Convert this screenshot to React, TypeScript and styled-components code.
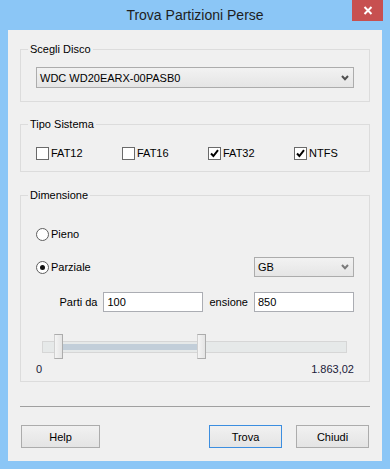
import React, { useState } from 'react';
import styled, { createGlobalStyle } from 'styled-components';

const GlobalStyle = createGlobalStyle`
  html, body {
    margin: 0;
    padding: 0;
    background: #8bc6f6;
  }
  body {
    font-family: "Liberation Sans", Arial, sans-serif;
    font-size: 11px;
    color: #000;
  }
`;

const Window = styled.div`
  width: 390px;
  height: 469px;
  background: #8bc6f6;
  display: flex;
  flex-direction: column;
`;

const TitleBar = styled.div`
  height: 30px;
  display: grid;
  grid-template-columns: 1fr auto 1fr;
`;

const Title = styled.div`
  grid-column: 2;
  font-size: 14px;
  line-height: 30px;
  color: #1e1e1e;
`;

const CloseButton = styled.div`
  grid-column: 3;
  justify-self: end;
  width: 31px;
  height: 21px;
  margin-right: 7px;
  background: #c75050;
  display: flex;
  align-items: center;
  justify-content: center;
`;

const Client = styled.div`
  margin: 0 8px;
  height: 431px;
  box-sizing: border-box;
  background: #f0f0f0;
  padding: 13px 12px 0 12px;
  display: flex;
  flex-direction: column;
`;

const Group = styled.fieldset<{ $gap?: number; $pt: number; $pb: number }>`
  margin: ${(p) => p.$gap ?? 0}px 0 0 0;
  padding: ${(p) => p.$pt}px 15px ${(p) => p.$pb}px 15px;
  border: 1px solid #dcdcdc;
  min-width: 0;
`;

const Legend = styled.legend`
  margin-left: -8px;
  padding: 0 2px;
  line-height: 13px;
  font-size: 11px;
  color: #000;
`;

const Combo = styled.div<{ $w?: number; $h: number; $arrow: string }>`
  box-sizing: border-box;
  width: ${(p) => (p.$w ? `${p.$w}px` : '100%')};
  height: ${(p) => p.$h}px;
  border: 1px solid #acacac;
  background: linear-gradient(#f2f2f2, #e5e5e5);
  display: flex;
  align-items: center;
  justify-content: space-between;
  padding: 0 4px 0 3px;
  svg path {
    stroke: ${(p) => p.$arrow};
  }
`;

const CheckRow = styled.div`
  display: grid;
  grid-template-columns: repeat(4, 86px);
  height: 13px;
`;

const CheckItem = styled.label`
  display: flex;
  align-items: center;
  gap: 2px;
  line-height: 13px;
`;

const Box = styled.span`
  box-sizing: border-box;
  width: 13px;
  height: 13px;
  border: 1px solid #6a6a6a;
  background: #fff;
  display: flex;
  align-items: center;
  justify-content: center;
`;

const RadioItem = styled.label`
  display: flex;
  align-items: center;
  gap: 2px;
  line-height: 13px;
`;

const RadioCircle = styled.span<{ $on?: boolean }>`
  box-sizing: border-box;
  width: 13px;
  height: 13px;
  border-radius: 50%;
  border: 1px solid #5e5e5e;
  background: #fff;
  display: flex;
  align-items: center;
  justify-content: center;
  &::after {
    content: '';
    width: 5px;
    height: 5px;
    border-radius: 50%;
    background: ${(p) => (p.$on ? '#111' : 'transparent')};
  }
`;

const Row = styled.div<{ $mt: number; $justify?: string }>`
  margin-top: ${(p) => p.$mt}px;
  display: flex;
  align-items: center;
  justify-content: ${(p) => p.$justify ?? 'flex-start'};
  gap: 6px;
`;

const TextInput = styled.input`
  box-sizing: border-box;
  width: 100px;
  height: 20px;
  border: 1px solid #abadb3;
  background: #fff;
  padding: 0 3px;
  font-family: "Liberation Sans", Arial, sans-serif;
  font-size: 11px;
  color: #000;
  outline: none;
`;

const Slider = styled.div`
  margin: 22px 7px 0 6px;
  height: 25px;
  position: relative;
  display: flex;
  align-items: center;
`;

const Track = styled.div`
  box-sizing: border-box;
  width: 100%;
  height: 12px;
  border: 1px solid #d6d6d6;
  background: #e6e9e9;
  position: relative;
`;

const Range = styled.div`
  position: absolute;
  top: 2px;
  height: 6px;
  background: #c2ced9;
`;

const Thumb = styled.div`
  position: absolute;
  top: 0;
  box-sizing: border-box;
  width: 9px;
  height: 25px;
  border: 1px solid #acacac;
  border-left-color: #d0d0d0;
  background: linear-gradient(90deg, #f4f4f4, #e4e4e4);
`;

const ScaleRow = styled.div`
  margin-top: 4px;
  display: flex;
  justify-content: space-between;
  line-height: 13px;
  color: #1a1a3a;
`;

const Separator = styled.div`
  margin-top: 24px;
  height: 1px;
  background: #a0a0a0;
`;

const Buttons = styled.div`
  margin-top: 18px;
  padding: 0 1px;
  display: flex;
  gap: 14px;
`;

const Button = styled.button<{ $w: number; $focus?: boolean; $push?: boolean }>`
  box-sizing: border-box;
  width: ${(p) => p.$w}px;
  height: 23px;
  margin-left: ${(p) => (p.$push ? 'auto' : '0')};
  border: 1px solid ${(p) => (p.$focus ? '#3c8ee0' : '#acacac')};
  background: linear-gradient(#f1f1f1, #e4e4e4);
  font-family: "Liberation Sans", Arial, sans-serif;
  font-size: 11px;
  color: #000;
  padding: 0;
`;

const Chevron = () => (
  <svg width="8" height="6" viewBox="0 0 8 6">
    <path d="M1 1 L4 4.2 L7 1" fill="none" strokeWidth="2" />
  </svg>
);

const Check = () => (
  <svg width="9" height="9" viewBox="0 0 9 9">
    <path d="M1 4.5 L3.4 7 L8 1.2" fill="none" stroke="#000" strokeWidth="2" />
  </svg>
);

const SYSTEMS = [
  ['FAT12', false],
  ['FAT16', false],
  ['FAT32', true],
  ['NTFS', true],
] as const;

const MAX = 1863.02;

export default function App() {
  const [from] = useState(100);
  const [to] = useState(850);
  const [partial] = useState(true);

  // posizioni cursori sulla traccia (305px)
  const leftPos = 12;
  const rightPos = 155;

  return (
    <Window>
      <GlobalStyle />
      <TitleBar>
        <Title>Trova Partizioni Perse</Title>
        <CloseButton>
          <svg width="10" height="9" viewBox="0 0 10 9">
            <path d="M1.5 1 L8.5 8 M8.5 1 L1.5 8" stroke="#fff" strokeWidth="2" />
          </svg>
        </CloseButton>
      </TitleBar>
      <Client>
        <Group $pt={11} $pb={13}>
          <Legend>Scegli Disco</Legend>
          <Combo $h={21} $arrow="#505050">
            <span>WDC WD20EARX-00PASB0</span>
            <Chevron />
          </Combo>
        </Group>

        <Group $gap={16} $pt={16} $pb={11}>
          <Legend>Tipo Sistema</Legend>
          <CheckRow>
            {SYSTEMS.map(([name, on]) => (
              <CheckItem key={name}>
                <Box>{on && <Check />}</Box>
                {name}
              </CheckItem>
            ))}
          </CheckRow>
        </Group>

        <Group $gap={17} $pt={26} $pb={5}>
          <Legend>Dimensione</Legend>
          <RadioItem>
            <RadioCircle $on={!partial} />
            Pieno
          </RadioItem>
          <Row $mt={16} $justify="space-between">
            <RadioItem>
              <RadioCircle $on={partial} />
              Parziale
            </RadioItem>
            <Combo $w={100} $h={20} $arrow="#7a7a7a">
              <span>GB</span>
              <Chevron />
            </Combo>
          </Row>
          <Row $mt={15} $justify="flex-end">
            <span>Parti da</span>
            <TextInput defaultValue={from} />
            <span>ensione</span>
            <TextInput defaultValue={to} />
          </Row>
          <Slider>
            <Track>
              <Range style={{ left: leftPos + 8 - 1, width: rightPos - leftPos - 8 }} />
            </Track>
            <Thumb style={{ left: leftPos }} />
            <Thumb style={{ left: rightPos }} />
          </Slider>
          <ScaleRow>
            <span>0</span>
            <span>{MAX.toLocaleString('it-IT', { minimumFractionDigits: 2 })}</span>
          </ScaleRow>
        </Group>

        <Separator />
        <Buttons>
          <Button $w={79}>Help</Button>
          <Button $w={73} $focus $push>
            Trova
          </Button>
          <Button $w={73}>Chiudi</Button>
        </Buttons>
      </Client>
    </Window>
  );
}
